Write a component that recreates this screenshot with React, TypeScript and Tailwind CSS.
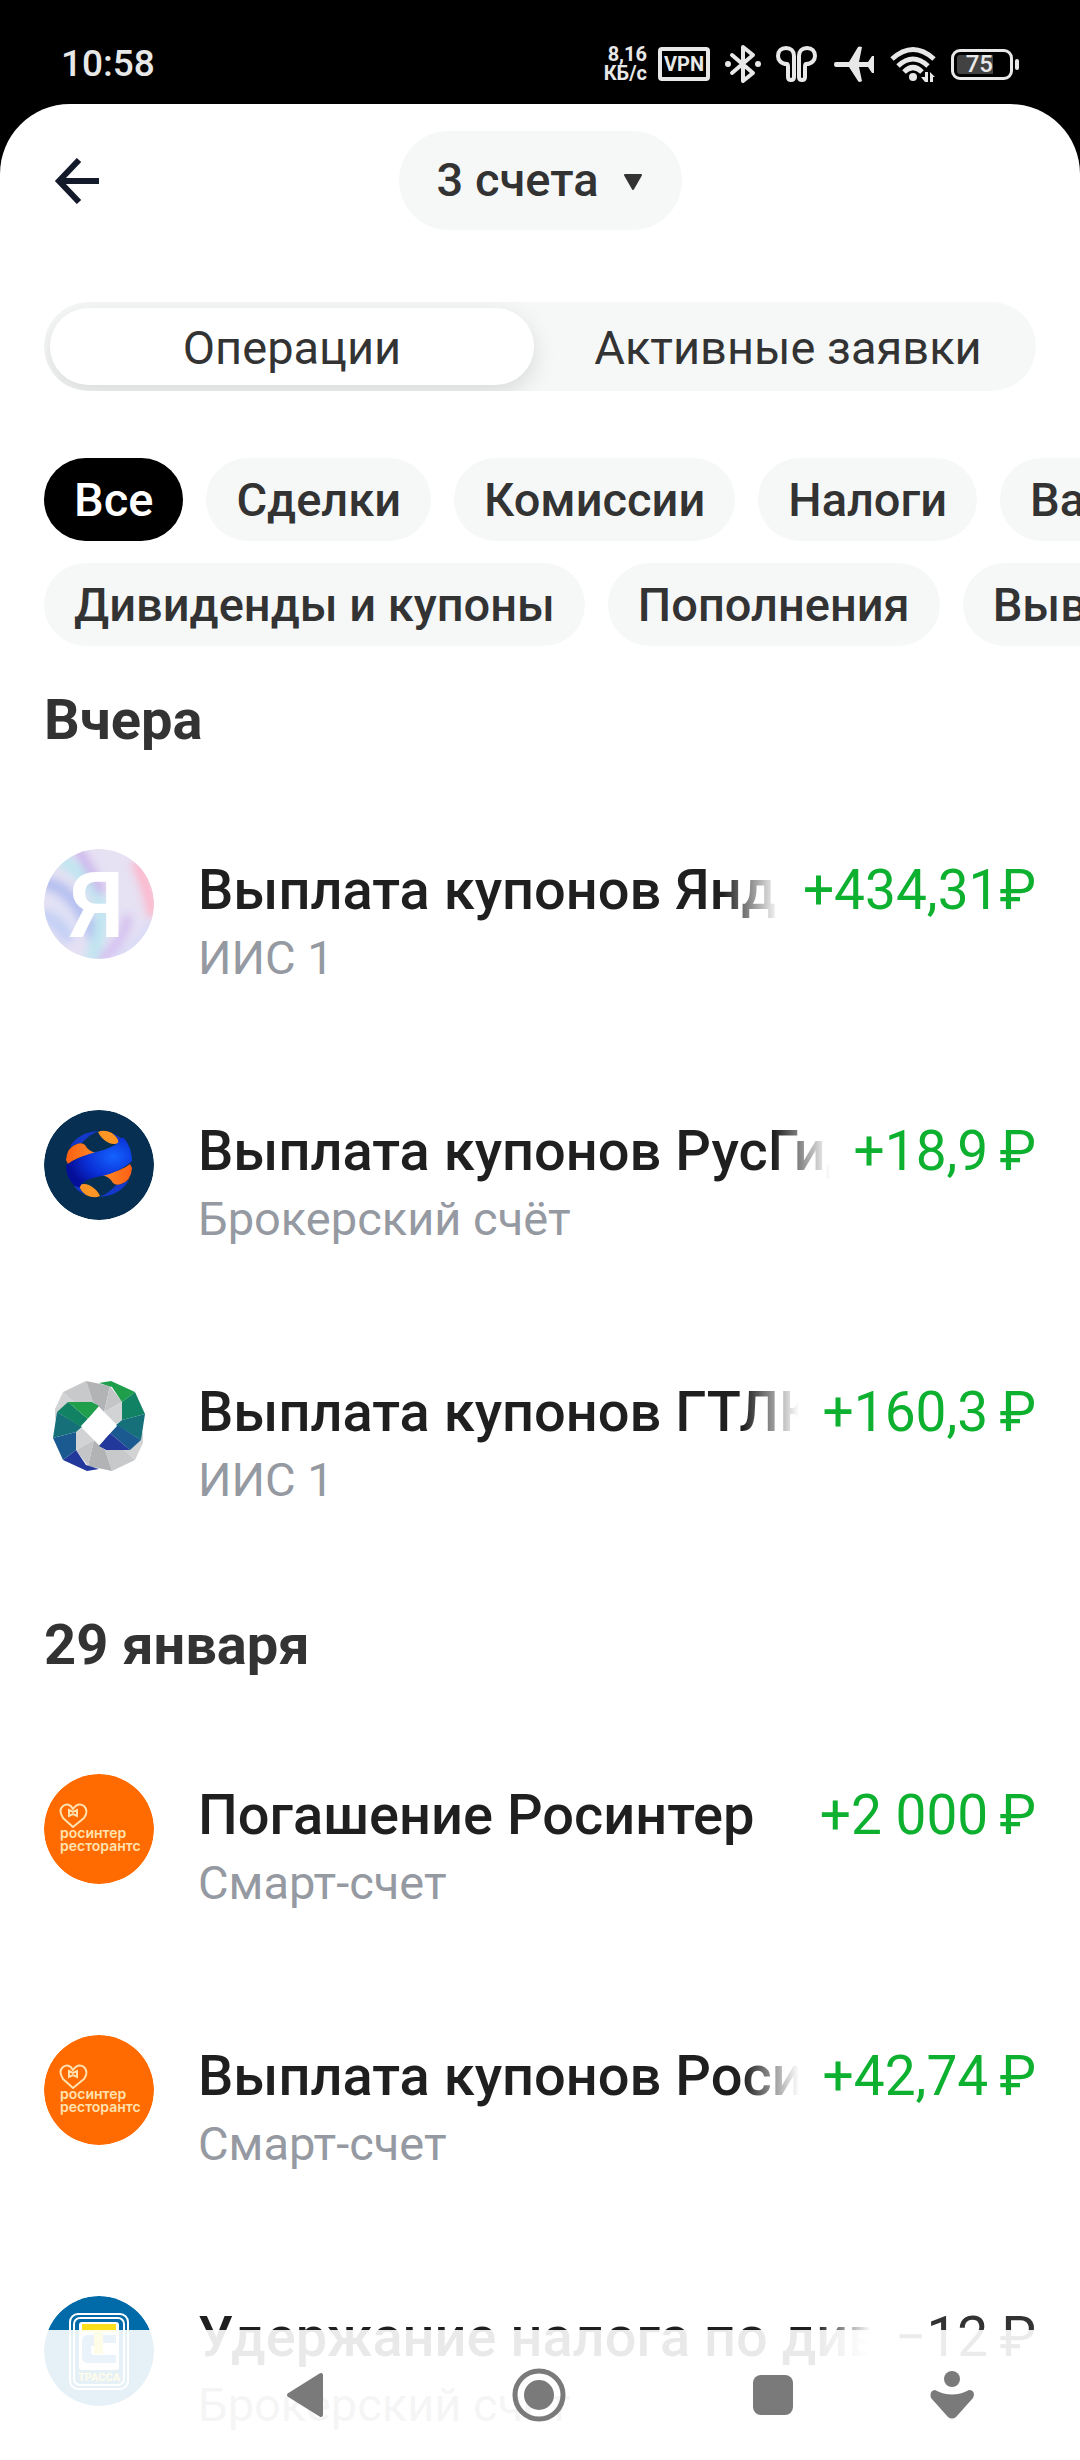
import { useState } from "react";

type LogoName = "yandex" | "rushydro" | "gtlk" | "rosinter" | "trassa";
type Operation = { id: number; logo: LogoName; title: string; account: string; amount: string; income: boolean; long: boolean };
type Group = { date: string; items: Operation[] };

const FILTERS = [
  ["Все", "Сделки", "Комиссии", "Налоги", "Валюта"],
  ["Дивиденды и купоны", "Пополнения", "Выводы"],
];

// \u2009 — тонкий пробел перед знаком рубля
const GROUPS: Group[] = [
  {
    date: "Вчера",
    items: [
      { id: 1, logo: "yandex", title: "Выплата купонов Яндекс", account: "ИИС 1", amount: "+434,31₽", income: true, long: true },
      { id: 2, logo: "rushydro", title: "Выплата купонов РусГидро", account: "Брокерский счёт", amount: "+18,9\u2009₽", income: true, long: true },
      { id: 3, logo: "gtlk", title: "Выплата купонов ГТЛК", account: "ИИС 1", amount: "+160,3\u2009₽", income: true, long: true },
    ],
  },
  {
    date: "29 января",
    items: [
      { id: 4, logo: "rosinter", title: "Погашение Росинтер", account: "Смарт-счет", amount: "+2 000\u2009₽", income: true, long: false },
      { id: 5, logo: "rosinter", title: "Выплата купонов Росинтер", account: "Смарт-счет", amount: "+42,74\u2009₽", income: true, long: true },
      { id: 6, logo: "trassa", title: "Удержание налога по дивидендам", account: "Брокерский счёт", amount: "−12\u2009₽", income: false, long: true },
    ],
  },
];

// ---------- logos ----------

function YandexLogo() {
  return (
    <svg viewBox="0 0 110 110" className="size-full">
      <defs>
        <clipPath id="ya-clip"><circle cx="55" cy="55" r="55" /></clipPath>
        <filter id="ya-soft" x="-30%" y="-30%" width="160%" height="160%"><feGaussianBlur stdDeviation="4" /></filter>
      </defs>
      <g clipPath="url(#ya-clip)">
        <rect width="110" height="110" fill="#e6e1f3" />
        <g filter="url(#ya-soft)" fill="none">
          <path d="M-4 34 Q18 34 34 58 T52 96" stroke="#b4bff0" strokeWidth="13" />
          <path d="M-4 66 Q14 70 26 92" stroke="#c3d0f5" strokeWidth="14" />
          <path d="M8 52 Q22 60 30 80" stroke="#dde2f7" strokeWidth="8" />
          <path d="M16 10 Q44 26 56 54 Q62 76 46 112" stroke="#bfe6f0" strokeWidth="13" />
          <path d="M32 -2 Q48 22 58 44" stroke="#ccb2ec" strokeWidth="9" />
          <path d="M84 66 Q82 90 56 112" stroke="#d3bdf0" strokeWidth="9" />
          <path d="M92 12 Q104 36 110 68" stroke="#ffb6ca" strokeWidth="11" />
          <path d="M108 72 Q96 96 72 108" stroke="#d9dcf8" strokeWidth="9" />
        </g>
      </g>
      <text x="80" y="88" textAnchor="end" fontFamily="Roboto, sans-serif" fontWeight="600" fontSize="90" fill="#fff">Я</text>
    </svg>
  );
}

function RushydroLogo() {
  return (
    <svg viewBox="0 0 110 110" className="size-full">
      <defs>
        <radialGradient id="rh-band" cx="0.72" cy="0.38" r="0.7">
          <stop offset="0" stopColor="#1463ff" />
          <stop offset="0.6" stopColor="#0a2fd6" />
          <stop offset="1" stopColor="#05109a" />
        </radialGradient>
        <linearGradient id="rh-orange" x1="0" x2="1">
          <stop offset="0" stopColor="#ff5f14" />
          <stop offset="1" stopColor="#ff8a24" />
        </linearGradient>
        <g id="rh-half">
          <path d="M25 38 Q34 22 55 21 Q46 24 38 33 Q30 34 25 38Z" fill="#1438c8" />
          <path d="M22 50 Q23 37 33 34 Q38 32 41 35 Q44 41 52 43 Q32 47 24 54Z" fill="url(#rh-orange)" />
          <path d="M54 22 Q60 19 68 23 Q74 27 75 33 Q70 35 65 33 Q57 29 54 22Z" fill="#ff9524" />
          <path d="M68 23 Q76 26 80 32 L75 33 Q74 27 68 23Z" fill="#1438c8" />
        </g>
      </defs>
      <circle cx="55" cy="55" r="55" fill="#062f51" />
      <use href="#rh-half" />
      <use href="#rh-half" transform="rotate(180 55 54)" />
      <path d="M22 55 Q36 46 52 42 Q72 37 76 30 Q77 27 80 28 Q88 38 88 51 Q76 62 58 66 Q40 69 37 75 Q36 79 31 76 Q22 69 22 55Z" fill="url(#rh-band)" />
    </svg>
  );
}

const GRAY_ARM = [
  { d: "M11 49 L11 38 L19 21 L31 32 L14 44Z", fill: "#d2d3d5" },
  { d: "M19 21 L42 10 L49 31 L31 32Z", fill: "#c7c9cb" },
  { d: "M42 10 L66 15 L60 41 L55 36 L49 31Z", fill: "#b1b3b5" },
  { d: "M66 15 L78 31 L60 41Z", fill: "#c3c5c7" },
  { d: "M60 41 L78 31 L78 49 L72 53Z", fill: "#d2d3d5" },
];
const COLOR_ARM = [
  "M55 12 L67 10 L91 21 L78 31 L68 16Z",
  "M91 21 L101 43 L78 49 L78 31Z",
  "M101 43 L97 69 L72 54 L78 49Z",
  "M97 69 L86 79 L66 62 L73 54Z",
  "M66 62 L86 79 L62 79 L55 75Z",
];
const ARM_FILLS = ["#1f9e4b", "#118264", "#15707a", "#1a5a90", "#22399b"];

function GtlkLogo() {
  return (
    <svg viewBox="0 0 110 110" className="size-full">
      {GRAY_ARM.map((p) => <path key={p.d} d={p.d} fill={p.fill} />)}
      <g transform="rotate(180 55 55)">
        {GRAY_ARM.map((p) => <path key={p.d} d={p.d} fill={p.fill} />)}
      </g>
      {COLOR_ARM.map((d, i) => <path key={d} d={d} fill={ARM_FILLS[i]} />)}
      <g transform="rotate(180 55 55)">
        {COLOR_ARM.map((d, i) => <path key={d} d={d} fill={ARM_FILLS[4 - i]} />)}
      </g>
      <path d="M55 36 L73 55 L55 74 L37 55Z" fill="#fff" />
    </svg>
  );
}

function RosinterLogo() {
  return (
    <svg viewBox="0 0 110 110" className="size-full">
      <circle cx="55" cy="55" r="55" fill="#ff6b00" />
      <g fill="none" stroke="#ffe2b0" strokeWidth="2">
        <path d="M29 53 L19 44 Q14 36 19 32 Q25 28 29 35 Q34 28 40 32 Q45 37 40 44Z" strokeLinejoin="round" />
        <path d="M25 36 L29 38 L33 36 V42 L29 40 L25 42Z" />
      </g>
      <g fontFamily="Inter, sans-serif" fontWeight="600" fontSize="14" fill="#ffe2b0">
        <text x="16" y="64">росинтер</text>
        <text x="16" y="77">ресторантс</text>
      </g>
    </svg>
  );
}

function TrassaLogo() {
  return (
    <svg viewBox="0 0 110 110" className="size-full">
      <circle cx="55" cy="55" r="55" fill="#006ba8" />
      <rect x="26" y="18" width="58" height="75" rx="8" fill="none" stroke="#fff" strokeWidth="2" />
      <rect x="30" y="22" width="50" height="67" rx="6" fill="none" stroke="#fff" strokeWidth="2" />
      <rect x="35" y="26" width="40" height="48" rx="3" fill="#fff" />
      <path d="M50 39 H44 Q38 39 38 45 V61 Q38 67 44 67 H72 V59 H50 Q47 59 47 55 V50 H50Z" fill="#2f86bd" />
      <path d="M59 39 H72 V47 H59Z" fill="#2f86bd" />
      <path d="M38 28 H72 V36 H59 V58 H50 V36 H38Z" fill="#fbdf1c" />
      <text x="55" y="85" textAnchor="middle" fontFamily="Roboto, sans-serif" fontWeight="700" fontSize="11" fill="#fbdf1c">ТРАССА</text>
    </svg>
  );
}

const LOGOS: Record<LogoName, () => React.ReactElement> = {
  yandex: YandexLogo,
  rushydro: RushydroLogo,
  gtlk: GtlkLogo,
  rosinter: RosinterLogo,
  trassa: TrassaLogo,
};

// ---------- system bars ----------

function StatusBar() {
  return (
    <div className="flex h-[104px] items-center justify-between pt-6 pr-[61px] pl-[61px] text-[#e8e8e8]">
      <span className="text-[37px] font-medium">10:58</span>
      <div className="flex items-center">
        <span className="mr-[11px] text-right text-[20px] leading-[19px] font-bold">8,16<br />КБ/с</span>
        <span className="mr-[15px] flex h-[34px] w-[52px] items-center justify-center rounded border-4 border-[#e8e8e8] text-[20px] leading-none font-bold">VPN</span>
        {/* bluetooth */}
        <svg viewBox="0 0 36 40" className="mr-[15px] h-10 w-9" fill="none" stroke="currentColor" strokeWidth="4">
          <path d="M7 11 L28 29 L18 37 V3 L28 11 L7 29" strokeLinejoin="round" strokeLinecap="round" />
          <circle cx="3" cy="20" r="3" fill="currentColor" stroke="none" />
          <circle cx="33" cy="20" r="3" fill="currentColor" stroke="none" />
        </svg>
        {/* earbuds */}
        <svg viewBox="0 0 41 36" className="mr-[17px] h-9 w-[41px]" fill="none" stroke="currentColor" strokeWidth="4">
          <path d="M11 18 C5 18 2 14 2 10 C2 5 5 2 10 2 C15 2 18 5 18 10 V31 Q18 34 15 34 Q12 34 12 31 V21 Q12 18 11 18Z" />
          <path d="M30 18 C36 18 39 14 39 10 C39 5 36 2 31 2 C26 2 23 5 23 10 V31 Q23 34 26 34 Q29 34 29 31 V21 Q29 18 30 18Z" />
        </svg>
        {/* airplane */}
        <svg viewBox="0 0 40 38" className="mr-4 h-[38px] w-10" fill="currentColor">
          <path d="M2 17 H15 L24 2 Q25 1 28 2 L25 17 H34 L38 11 H40 V28 H38 L34 22 H25 L28 36 Q25 38 24 36 L15 22 H2 Q0 22 0 19 Q0 17 2 17Z" />
        </svg>
        {/* wifi */}
        <svg viewBox="0 0 46 36" className="mr-[15px] h-9 w-[46px]">
          <g fill="none" stroke="currentColor" strokeWidth="5">
            <path d="M2 13 Q23 -6 44 13" />
            <path d="M8 20 Q23 6 38 20" />
            <path d="M14 26 Q23 17 32 26" />
          </g>
          <circle cx="23" cy="31" r="4" fill="currentColor" />
          <path d="M35 26 V36 H38 V26Z M35 36 L31 31 H35Z M40 36 V26 L45 31 H43 V36Z" fill="currentColor" />
        </svg>
        {/* battery */}
        <div className="flex items-center gap-[2px]">
          <div className="flex h-[31px] w-[62px] rounded-[9px] border-[3px] border-[#e8e8e8] p-[3px]">
            <div className="flex w-9 items-center justify-end rounded-l-[3px] bg-[#424242] text-[24px] leading-none font-medium">75</div>
          </div>
          <div className="h-[11px] w-1 rounded-sm bg-[#e8e8e8]" />
        </div>
      </div>
    </div>
  );
}

function NavBar() {
  return (
    <nav className="fixed inset-x-0 bottom-0 grid h-[130px] grid-cols-[188fr_234fr_234fr_234fr_124fr_66fr] items-center bg-white/90 text-[#7a7a7a]">
      <button aria-label="Назад" className="col-start-2 flex justify-center">
        <svg viewBox="0 0 38 46" className="h-[46px] w-[38px]" fill="currentColor" stroke="currentColor" strokeWidth="4" strokeLinejoin="round">
          <path d="M3 23 L35 3 V43Z" />
        </svg>
      </button>
      <button aria-label="Домой" className="flex justify-center">
        <svg viewBox="0 0 54 54" className="size-[54px]">
          <circle cx="27" cy="27" r="24" fill="none" stroke="currentColor" strokeWidth="5" />
          <circle cx="27" cy="27" r="15" fill="currentColor" />
        </svg>
      </button>
      <button aria-label="Недавние" className="flex justify-center">
        <span className="size-10 rounded-lg bg-[#7a7a7a]" />
      </button>
      <button aria-label="Специальные возможности" className="flex justify-center">
        <svg viewBox="0 0 44 48" className="h-12 w-11" fill="currentColor">
          <circle cx="22" cy="8" r="8" />
          <path d="M5 19 Q22 28 39 19 Q44 19 44 24 L43 27 L26 46 Q22 49 18 46 L1 27 Q-1 20 5 19Z" />
        </svg>
      </button>
    </nav>
  );
}

// ---------- screen ----------

function OperationRow({ op }: { op: Operation }) {
  const Logo = LOGOS[op.logo];
  return (
    <li className="flex items-start">
      <div className="mr-[44px] size-[110px] shrink-0 overflow-hidden rounded-full"><Logo /></div>
      <div className="min-w-0 flex-1 pt-[6px]">
        <div className="flex gap-6 leading-[70px]">
          <div className={"min-w-0 flex-1 overflow-hidden text-[56px] font-medium whitespace-nowrap text-[#1f1f1f] " + (op.long ? "[mask-image:linear-gradient(to_right,#000_calc(100%-56px),transparent)]" : "")}>
            {op.title}
          </div>
          <div className={"shrink-0 text-[55px] whitespace-nowrap " + (op.income ? "text-[#0db02f]" : "text-[#333333]")}>{op.amount}</div>
        </div>
        <div className="text-[47px] leading-[66px] text-[#9599a1]">{op.account}</div>
      </div>
    </li>
  );
}

export default function App() {
  const [tab, setTab] = useState("Операции");
  const [filter, setFilter] = useState("Все");

  return (
    <div className="flex min-h-screen flex-col overflow-hidden bg-black font-['Roboto',sans-serif]">
      <StatusBar />
      <main className="flex-1 rounded-t-[70px] bg-white pt-[27px] text-[#333333]">
        <header className="grid grid-cols-[1fr_auto_1fr] items-center px-[44px]">
          <button aria-label="Назад" className="ml-[10px] justify-self-start">
            <svg viewBox="0 0 46 46" className="size-[46px]" fill="none" stroke="#131b2b" strokeWidth="6">
              <path d="M45 23 H6 M25 2 L5 23 L25 44" />
            </svg>
          </button>
          <div className="relative">
            <select aria-label="Счета" className="h-[99px] appearance-none rounded-full bg-[#f6f8f8] pr-[83px] pl-[38px] text-[47px] font-medium">
              <option>3 счета</option>
            </select>
            <svg viewBox="0 0 18 16" className="pointer-events-none absolute top-[43px] right-10 h-4 w-[18px]" fill="#333333" stroke="#333333" strokeWidth="2" strokeLinejoin="round">
              <path d="M1 1 H17 L9 15Z" />
            </svg>
          </div>
        </header>

        {/* вкладки */}
        <div role="tablist" className="mx-[44px] mt-[72px] grid grid-cols-2 gap-3 overflow-hidden rounded-full bg-[#f6f8f8] p-[6px]">
          {["Операции", "Активные заявки"].map((t) => (
            <button
              key={t}
              role="tab"
              aria-selected={tab === t}
              onClick={() => setTab(t)}
              className={"h-[77px] rounded-full pt-[2px] text-[47px] leading-[75px] whitespace-nowrap " + (tab === t ? "bg-white shadow-[0_8px_24px_rgba(0,0,0,0.12)]" : "")}
            >
              {t}
            </button>
          ))}
        </div>

        {/* фильтры */}
        <div className="mt-[67px] flex flex-col gap-[22px] overflow-hidden pl-[44px]">
          {FILTERS.map((row) => (
            <div key={row[0]} className="flex gap-[23px]">
              {row.map((f) => (
                <button
                  key={f}
                  onClick={() => setFilter(f)}
                  className={"h-[83px] shrink-0 rounded-full px-[30px] pt-[2px] text-[47px] font-medium whitespace-nowrap " + (filter === f ? "bg-black text-white" : "bg-[#f6f8f8]")}
                >
                  {f}
                </button>
              ))}
            </div>
          ))}
        </div>

        {/* операции по дням */}
        <div className="mt-[42px] flex flex-col gap-[100px] px-[44px]">
          {GROUPS.map((g) => (
            <section key={g.date}>
              <h2 className="text-[56px] leading-[64px] font-bold">{g.date}</h2>
              <ul className="mt-[97px] flex flex-col gap-[119px]">
                {g.items.map((op) => <OperationRow key={op.id} op={op} />)}
              </ul>
            </section>
          ))}
        </div>
      </main>
      <NavBar />
    </div>
  );
}
